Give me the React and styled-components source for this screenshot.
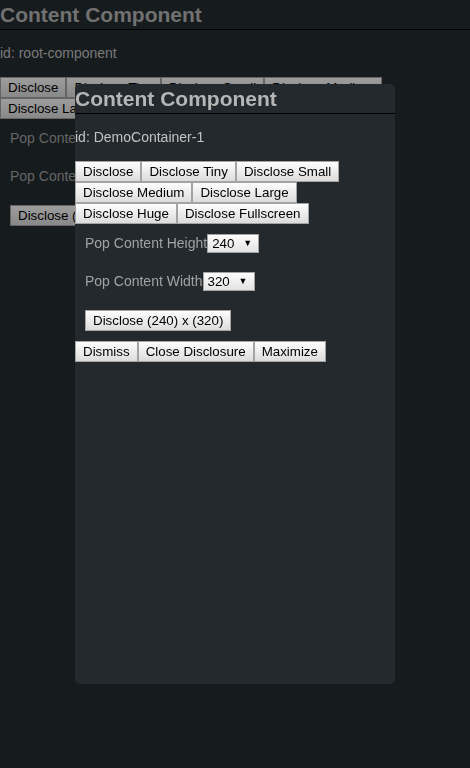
import React from "react";
import styled, { createGlobalStyle } from "styled-components";

const GlobalStyle = createGlobalStyle`
   html, body {
      margin: 0;
      padding: 0;
      background: #252c30;
      font-family: "Liberation Sans", Arial, sans-serif;
   }
`;

const Page = styled.div`
   width: 470px;
   height: 768px;
   background: #252c30;
   color: #c4c4c4;
`;

const Header = styled.div`
   height: 29px;
   line-height: 29px;
   font-size: 21px;
   font-weight: bold;
   color: #b6b6b6;
   border-bottom: 1px solid #000;
   white-space: nowrap;
`;

const IdLine = styled.div`
   padding: 15px 0 16px;
   line-height: 16px;
   font-size: 14px;
   color: #c2c2c2;
`;

const ButtonWrap = styled.div`
   display: flex;
   flex-wrap: wrap;
`;

const Button = styled.button`
   height: 21px;
   margin: 0;
   padding: 0 7px;
   border: 1px solid #a3a3a3;
   border-radius: 0;
   background: linear-gradient(#fdfdfd, #dcdcdc);
   color: #000;
   font-family: "Liberation Sans", Arial, sans-serif;
   font-size: 13.33px;
   line-height: 19px;
   white-space: nowrap;
`;

const Form = styled.div`
   padding: 9px 10px 10px;
`;

const Field = styled.div`
   display: flex;
   align-items: center;
   height: 20px;
   margin-bottom: ${(p) => p.gap}px;
   font-size: 14px;
   color: #a2a2a2;
   white-space: nowrap;
`;

const Select = styled.div`
   display: flex;
   align-items: center;
   justify-content: space-between;
   box-sizing: border-box;
   width: 52px;
   height: 19px;
   padding: 0 6px 0 4px;
   border: 1px solid #a3a3a3;
   background: linear-gradient(#fdfdfd, #e2e2e2);
   color: #000;
   font-size: 13.33px;
`;

const Arrow = styled.span`
   font-size: 9px;
`;

const Backdrop = styled.div`
   position: fixed;
   inset: 0;
   background: rgba(0, 0, 0, 0.38);
`;

const Dialog = styled.div`
   position: fixed;
   left: 75px;
   top: 84px;
   width: 320px;
   height: 600px;
   background: #23292d;
   border-radius: 5px;
   overflow: hidden;
`;

const sizes = ["", "Tiny", "Small", "Medium", "Large", "Huge", "Fullscreen"];

const ContentComponent = ({ id, dismissable }) => (
   <div>
      <Header>Content Component</Header>
      <IdLine>id: {id}</IdLine>
      <ButtonWrap>
         {sizes.map((s) => (
            <Button key={s}>{s ? `Disclose ${s}` : "Disclose"}</Button>
         ))}
      </ButtonWrap>
      <Form>
         <Field gap={18}>
            Pop Content Height
            <Select>
               240<Arrow>▼</Arrow>
            </Select>
         </Field>
         <Field gap={19}>
            Pop Content Width
            <Select>
               320<Arrow>▼</Arrow>
            </Select>
         </Field>
         <ButtonWrap>
            <Button>Disclose (240) x (320)</Button>
         </ButtonWrap>
      </Form>
      {dismissable && (
         <ButtonWrap>
            <Button>Dismiss</Button>
            <Button>Close Disclosure</Button>
            <Button>Maximize</Button>
         </ButtonWrap>
      )}
   </div>
);

export default function App() {
   return (
      <Page>
         <GlobalStyle />
         <ContentComponent id="root-component" />
         <Backdrop />
         <Dialog>
            <ContentComponent id="DemoContainer-1" dismissable />
         </Dialog>
      </Page>
   );
}
